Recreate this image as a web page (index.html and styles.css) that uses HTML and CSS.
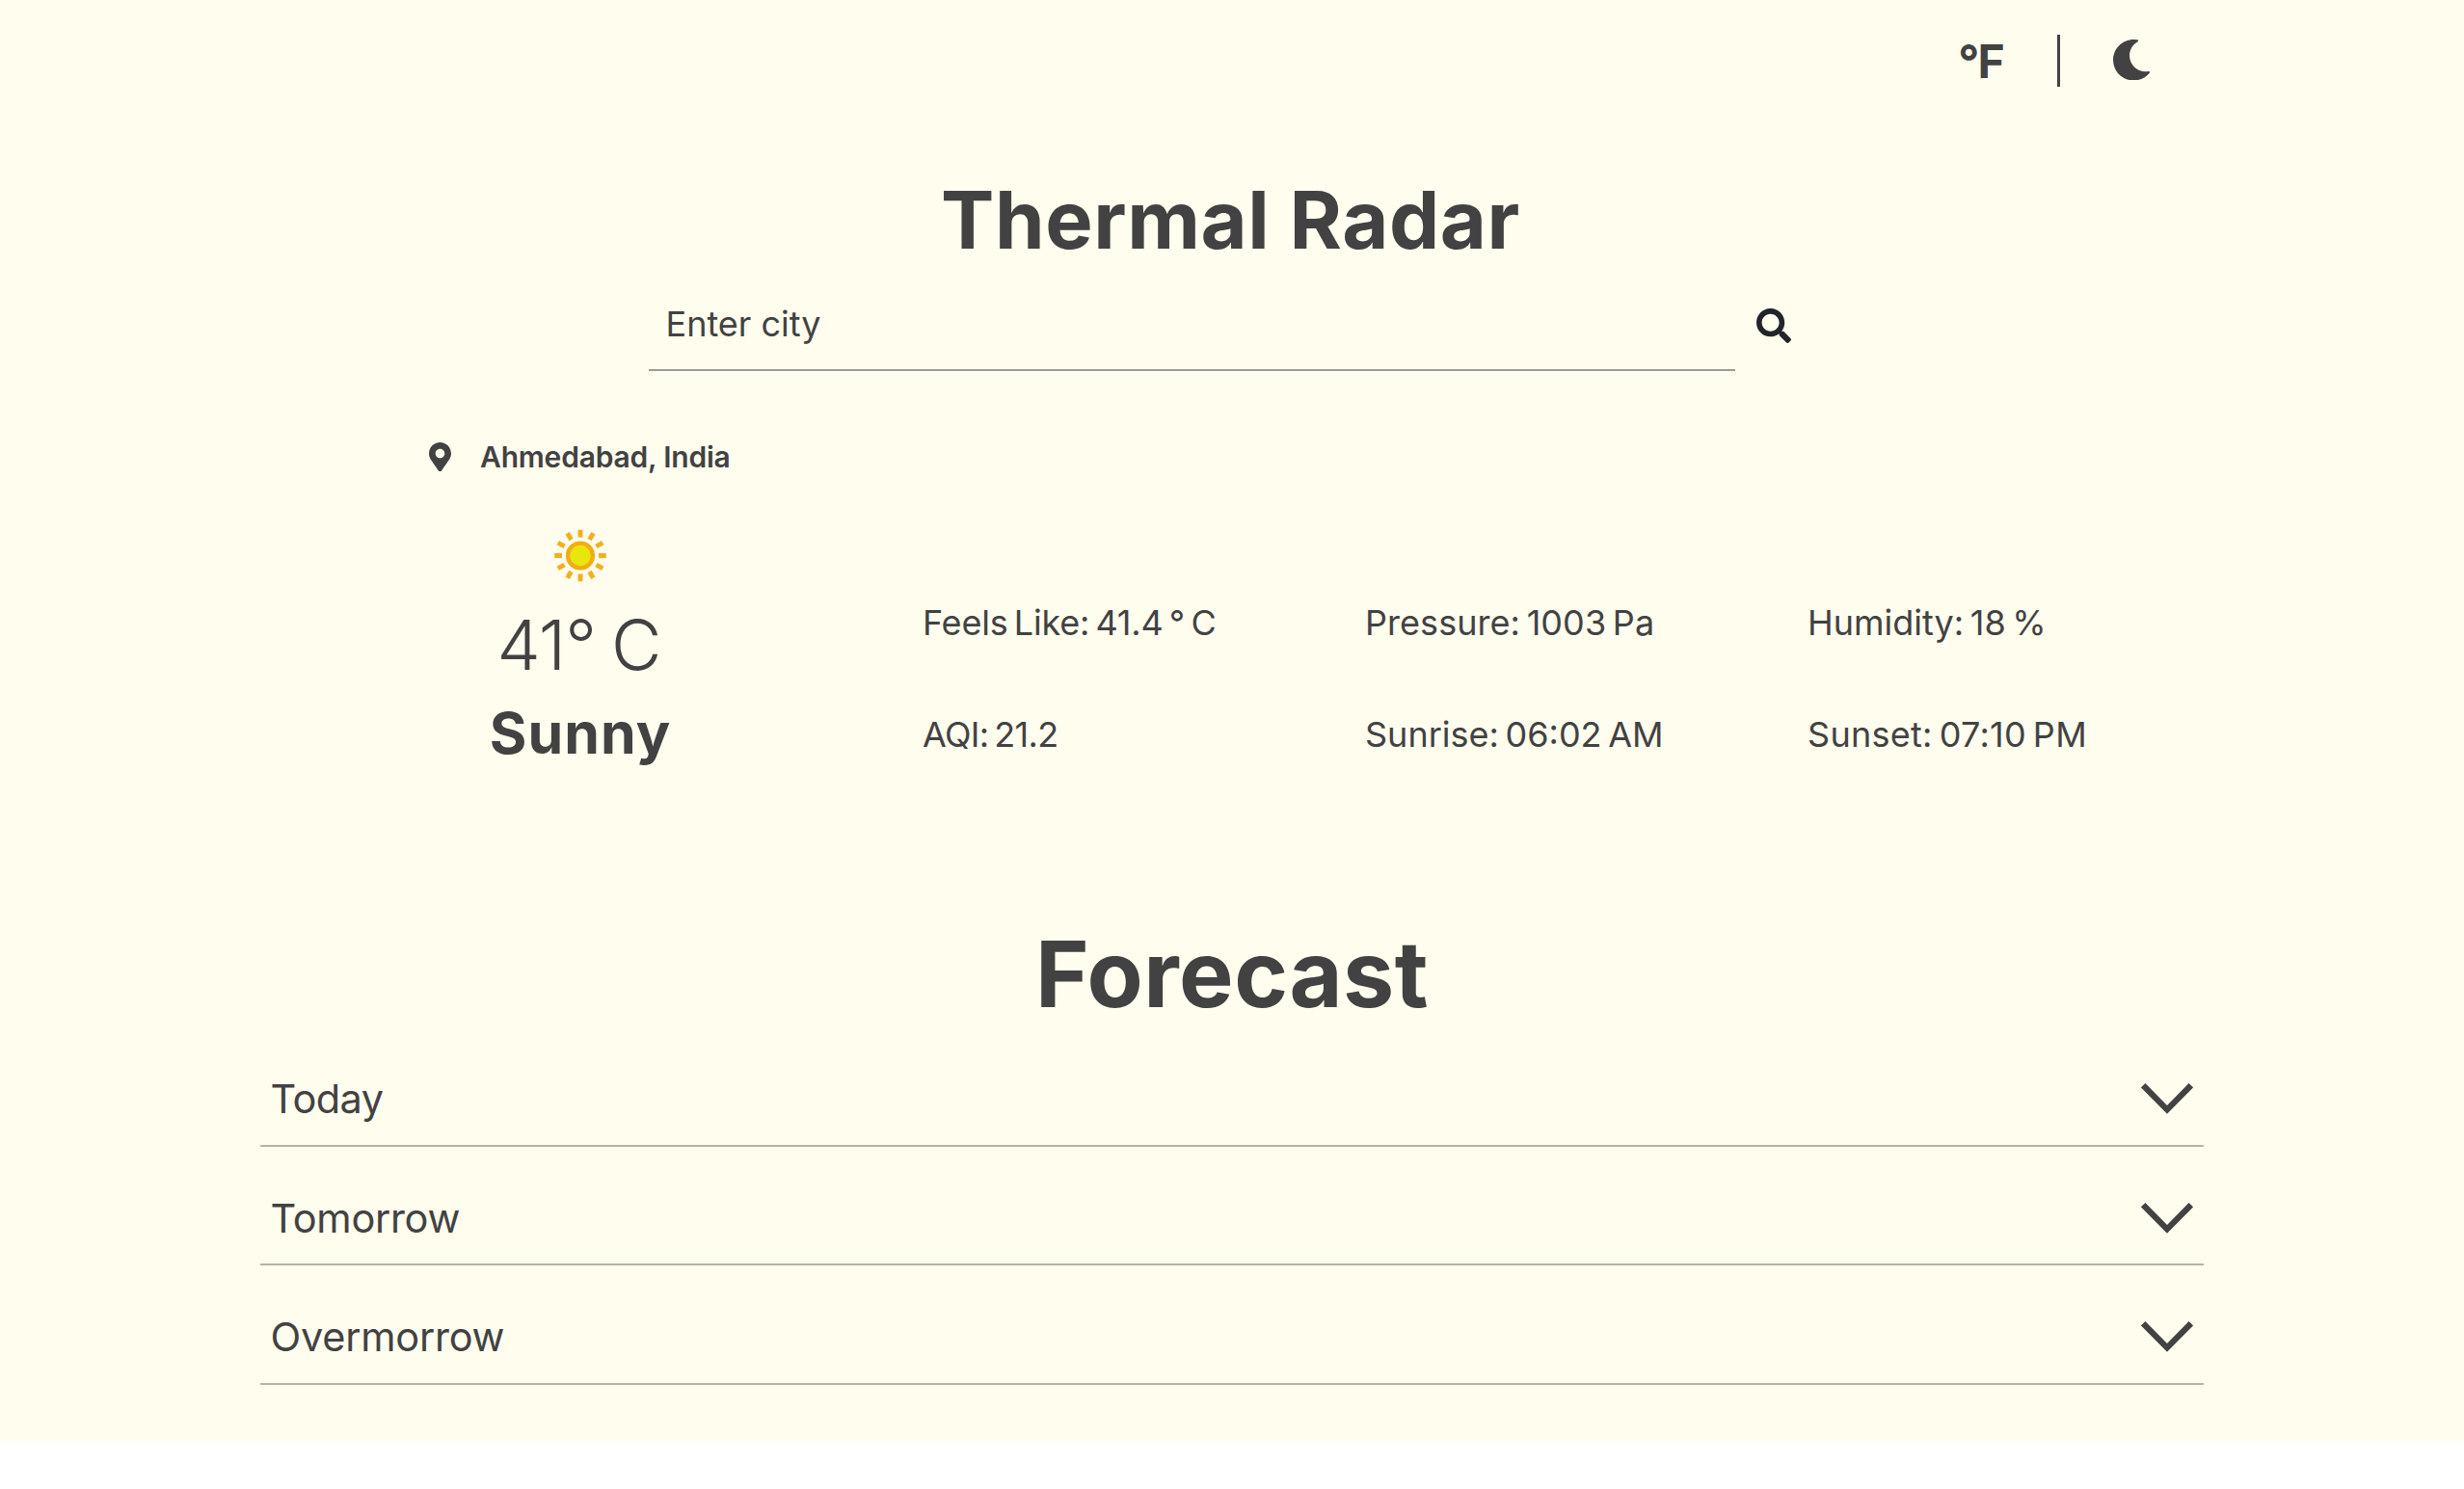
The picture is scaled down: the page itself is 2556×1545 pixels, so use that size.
FILE: index.html
```html
<!DOCTYPE html>
<html lang="en">
<head>
  <meta charset="utf-8">
  <title>Thermal Radar</title>
  <link rel="stylesheet" href="styles.css">
</head>
<body>
  <svg class="sprite" aria-hidden="true">
    <symbol id="chevron" viewBox="0 0 54 32">
      <path d="M2.2 2.2 27 27.4 51.8 2.2" fill="none" stroke="currentColor" stroke-width="6.2"/>
    </symbol>
  </svg>
  <main class="app">
    <header class="toolbar">
      <span class="unit">°F</span>
      <span class="divider"></span>
      <svg class="moon" viewBox="27 0 457 512"><path fill="currentColor" d="M283.211 512c78.962 0 151.079-35.925 198.857-94.792 7.068-8.708-.639-21.43-11.562-19.35-124.203 23.654-238.262-71.576-238.262-196.954 0-72.222 38.662-138.635 101.498-174.394 9.686-5.512 7.25-20.197-3.756-22.23A258.156 258.156 0 0 0 283.211 0c-141.309 0-256 114.511-256 256 0 141.309 114.511 256 256 256z"/></svg>
    </header>

    <h1 class="title">Thermal Radar</h1>

    <form class="search">
      <input class="search-input" type="text" placeholder="Enter city">
      <svg class="search-icon" viewBox="0 0 512 512"><path fill="currentColor" d="M505 442.7L405.3 343c-4.5-4.5-10.6-7-17-7H372c27.6-35.3 44-79.7 44-128C416 93.1 322.9 0 208 0S0 93.1 0 208s93.1 208 208 208c48.3 0 92.7-16.4 128-44v16.3c0 6.4 2.5 12.5 7 17l99.7 99.7c9.4 9.4 24.6 9.4 33.9 0l28.3-28.3c9.4-9.4 9.4-24.6.1-34zM208 336c-70.7 0-128-57.2-128-128 0-70.7 57.2-128 128-128 70.7 0 128 57.2 128 128 0 70.7-57.2 128-128 128z"/></svg>
    </form>

    <div class="location">
      <svg class="pin" viewBox="0 0 384 512"><path fill="currentColor" d="M172.268 501.67C26.97 291.031 0 269.413 0 192 0 85.961 85.961 0 192 0s192 85.961 192 192c0 77.413-26.97 99.031-172.268 309.67-9.535 13.774-29.93 13.773-39.464 0zM192 272c44.183 0 80-35.817 80-80s-35.817-80-80-80-80 35.817-80 80 35.817 80 80 80z"/></svg>
      <span class="place">Ahmedabad, India</span>
    </div>

    <section class="weather">
      <div class="current">
        <svg class="sun" viewBox="-48 -48.5 96 96">
          <circle r="12.9" fill="#e9e50d" stroke="#f0ae14" stroke-width="4.4"/>
          <g stroke="#f3b01c" stroke-width="4.9">
            <path d="M0-19V-26.8M0 19V26.8M19 0H26.8M-19 0H-26.8"/>
            <path transform="rotate(30)" d="M0-19V-26.8M0 19V26.8M19 0H26.8M-19 0H-26.8"/>
            <path transform="rotate(60)" d="M0-19V-26.8M0 19V26.8M19 0H26.8M-19 0H-26.8"/>
          </g>
        </svg>
        <div class="temperature">41° C</div>
        <div class="condition">Sunny</div>
      </div>
      <div class="details">
        <span class="detail feels">Feels Like: 41.4 ° C</span>
        <span class="detail pressure">Pressure: 1003 Pa</span>
        <span class="detail humidity">Humidity: 18 %</span>
        <span class="detail aqi">AQI: 21.2</span>
        <span class="detail sunrise">Sunrise: 06:02 AM</span>
        <span class="detail sunset">Sunset: 07:10 PM</span>
      </div>
    </section>

    <h2 class="forecast-title">Forecast</h2>
    <section class="forecast">
      <div class="day"><span class="today">Today</span><svg class="chevron"><use href="#chevron"/></svg></div>
      <div class="day"><span class="tomorrow">Tomorrow</span><svg class="chevron"><use href="#chevron"/></svg></div>
      <div class="day"><span class="overmorrow">Overmorrow</span><svg class="chevron"><use href="#chevron"/></svg></div>
    </section>
  </main>
</body>
</html>
```
FILE: styles.css
```css
* { box-sizing: border-box; }

body {
  margin: 0;
  background: #fff;
  color: #424242;
  font-family: Inter, "Liberation Sans", sans-serif;
}

svg { display: block; flex: none; }
.sprite { display: none; }

.app {
  height: 1495px;
  background: #fffdee;
}

/* Toolbar */
.toolbar {
  display: flex;
  align-items: center;
  justify-content: flex-end;
  height: 126px;
  padding-right: 326.5px;
}
.unit {
  font-size: 48px;
  font-weight: 700;
  line-height: 58px;
  letter-spacing: -1.8px;
  margin: 2px 55.5px 0 0;
}
.divider {
  width: 3px;
  height: 54px;
  margin-right: 55px;
  background: #424242;
}
.moon {
  width: 38px;
  height: 42.5px;
  margin-bottom: 2px;
}

.title {
  margin: 52px 3px 0 0;
  font-size: 83px;
  font-weight: 700;
  line-height: 100px;
  letter-spacing: 0.55px;
  text-align: center;
}

/* Search */
.search {
  display: flex;
  align-items: center;
  gap: 22px;
  margin: 12px 0 0 673px;
}
.search-input {
  width: 1127px;
  height: 95px;
  padding: 0 17px 1px 17.5px;
  border: 0;
  border-bottom: 2px solid #9c9c92;
  background: none;
  color: #424242;
  font: 400 36px/44px Inter, "Liberation Sans", sans-serif;
}
.search-input::placeholder { color: #424242; opacity: 1; }
.search-icon {
  width: 36px;
  height: 36px;
  color: #212529;
}

/* Location */
.location {
  display: flex;
  align-items: center;
  gap: 30px;
  height: 40px;
  margin: 69px 0 0 445px;
}
.pin { width: 23px; height: 30.6px; }
.place {
  font-size: 30px;
  font-weight: 600;
  letter-spacing: -0.2px;
}

/* Current weather */
.weather {
  display: flex;
  margin: 34px 0 0 402px;
}
.current {
  display: flex;
  flex-direction: column;
  align-items: center;
  width: 400px;
}
.sun { width: 96px; height: 96px; }
.temperature {
  margin-right: 3px;
  font-size: 72px;
  font-weight: 300;
  line-height: 89px;
  letter-spacing: -0.8px;
  word-spacing: -3.8px;
}
.condition {
  font-size: 59px;
  font-weight: 700;
  line-height: 96px;
  letter-spacing: 1px;
}
.details {
  display: grid;
  grid-template-columns: repeat(3, 459px);
  grid-template-rows: repeat(2, 116px);
  align-items: center;
  margin: 60px 0 0 155px;
  font-size: 36px;
  word-spacing: -3.5px;
}
.feels { letter-spacing: -0.22px; }
.pressure { letter-spacing: 0.05px; }
.aqi { letter-spacing: -0.7px; }
.sunset { letter-spacing: 0.28px; }

/* Forecast */
.forecast-title {
  margin: 133px 0 0;
  font-size: 95px;
  font-weight: 700;
  line-height: 116px;
  letter-spacing: 0.5px;
  text-align: center;
}
.forecast {
  width: 2016px;
  margin: -3px auto 0;
}
.day {
  display: flex;
  align-items: center;
  justify-content: space-between;
  height: 123.5px;
  padding: 51px 11.5px 24.5px 10.5px;
  border-bottom: 2px solid #b4b4a9;
  font-size: 41.5px;
  line-height: 46px;
}
.chevron { width: 54px; height: 32px; }
.today { letter-spacing: -0.6px; }
.tomorrow { letter-spacing: -0.3px; }
.overmorrow { letter-spacing: -0.25px; }
```
